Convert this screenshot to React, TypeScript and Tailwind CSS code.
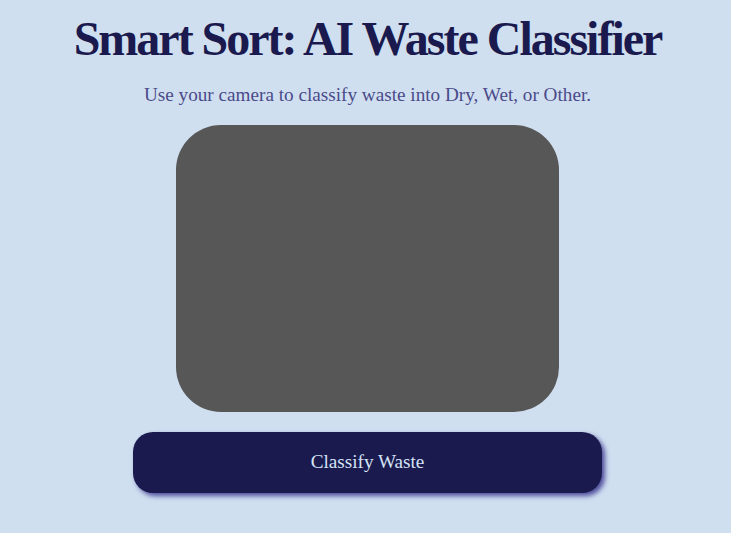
export default function App() {
  return (
    <div className="min-h-[533px] w-full bg-[#cfdff0] flex flex-col items-center pl-[4px]" style={{ fontFamily: '"Liberation Serif", serif' }}>
      <h1 className="mt-[11px] text-[48px] leading-[56px] font-bold text-[#1b1a4e] tracking-[-2px]">Smart Sort: AI Waste Classifier</h1>
      <p className="mt-[16px] text-[19.2px] leading-[23px] text-[#4b4a8a]">Use your camera to classify waste into Dry, Wet, or Other.</p>
      <div className="mt-[19px] w-[383px] h-[287px] rounded-[45px] bg-[#575757]" />
      <button className="mt-[20px] w-[469px] h-[61px] rounded-[20px] bg-[#1b1a4e] text-[#d4e4f7] text-[19.2px] shadow-[3px_3px_5px_#4f4d9c]">Classify Waste</button>
    </div>
  );
}
